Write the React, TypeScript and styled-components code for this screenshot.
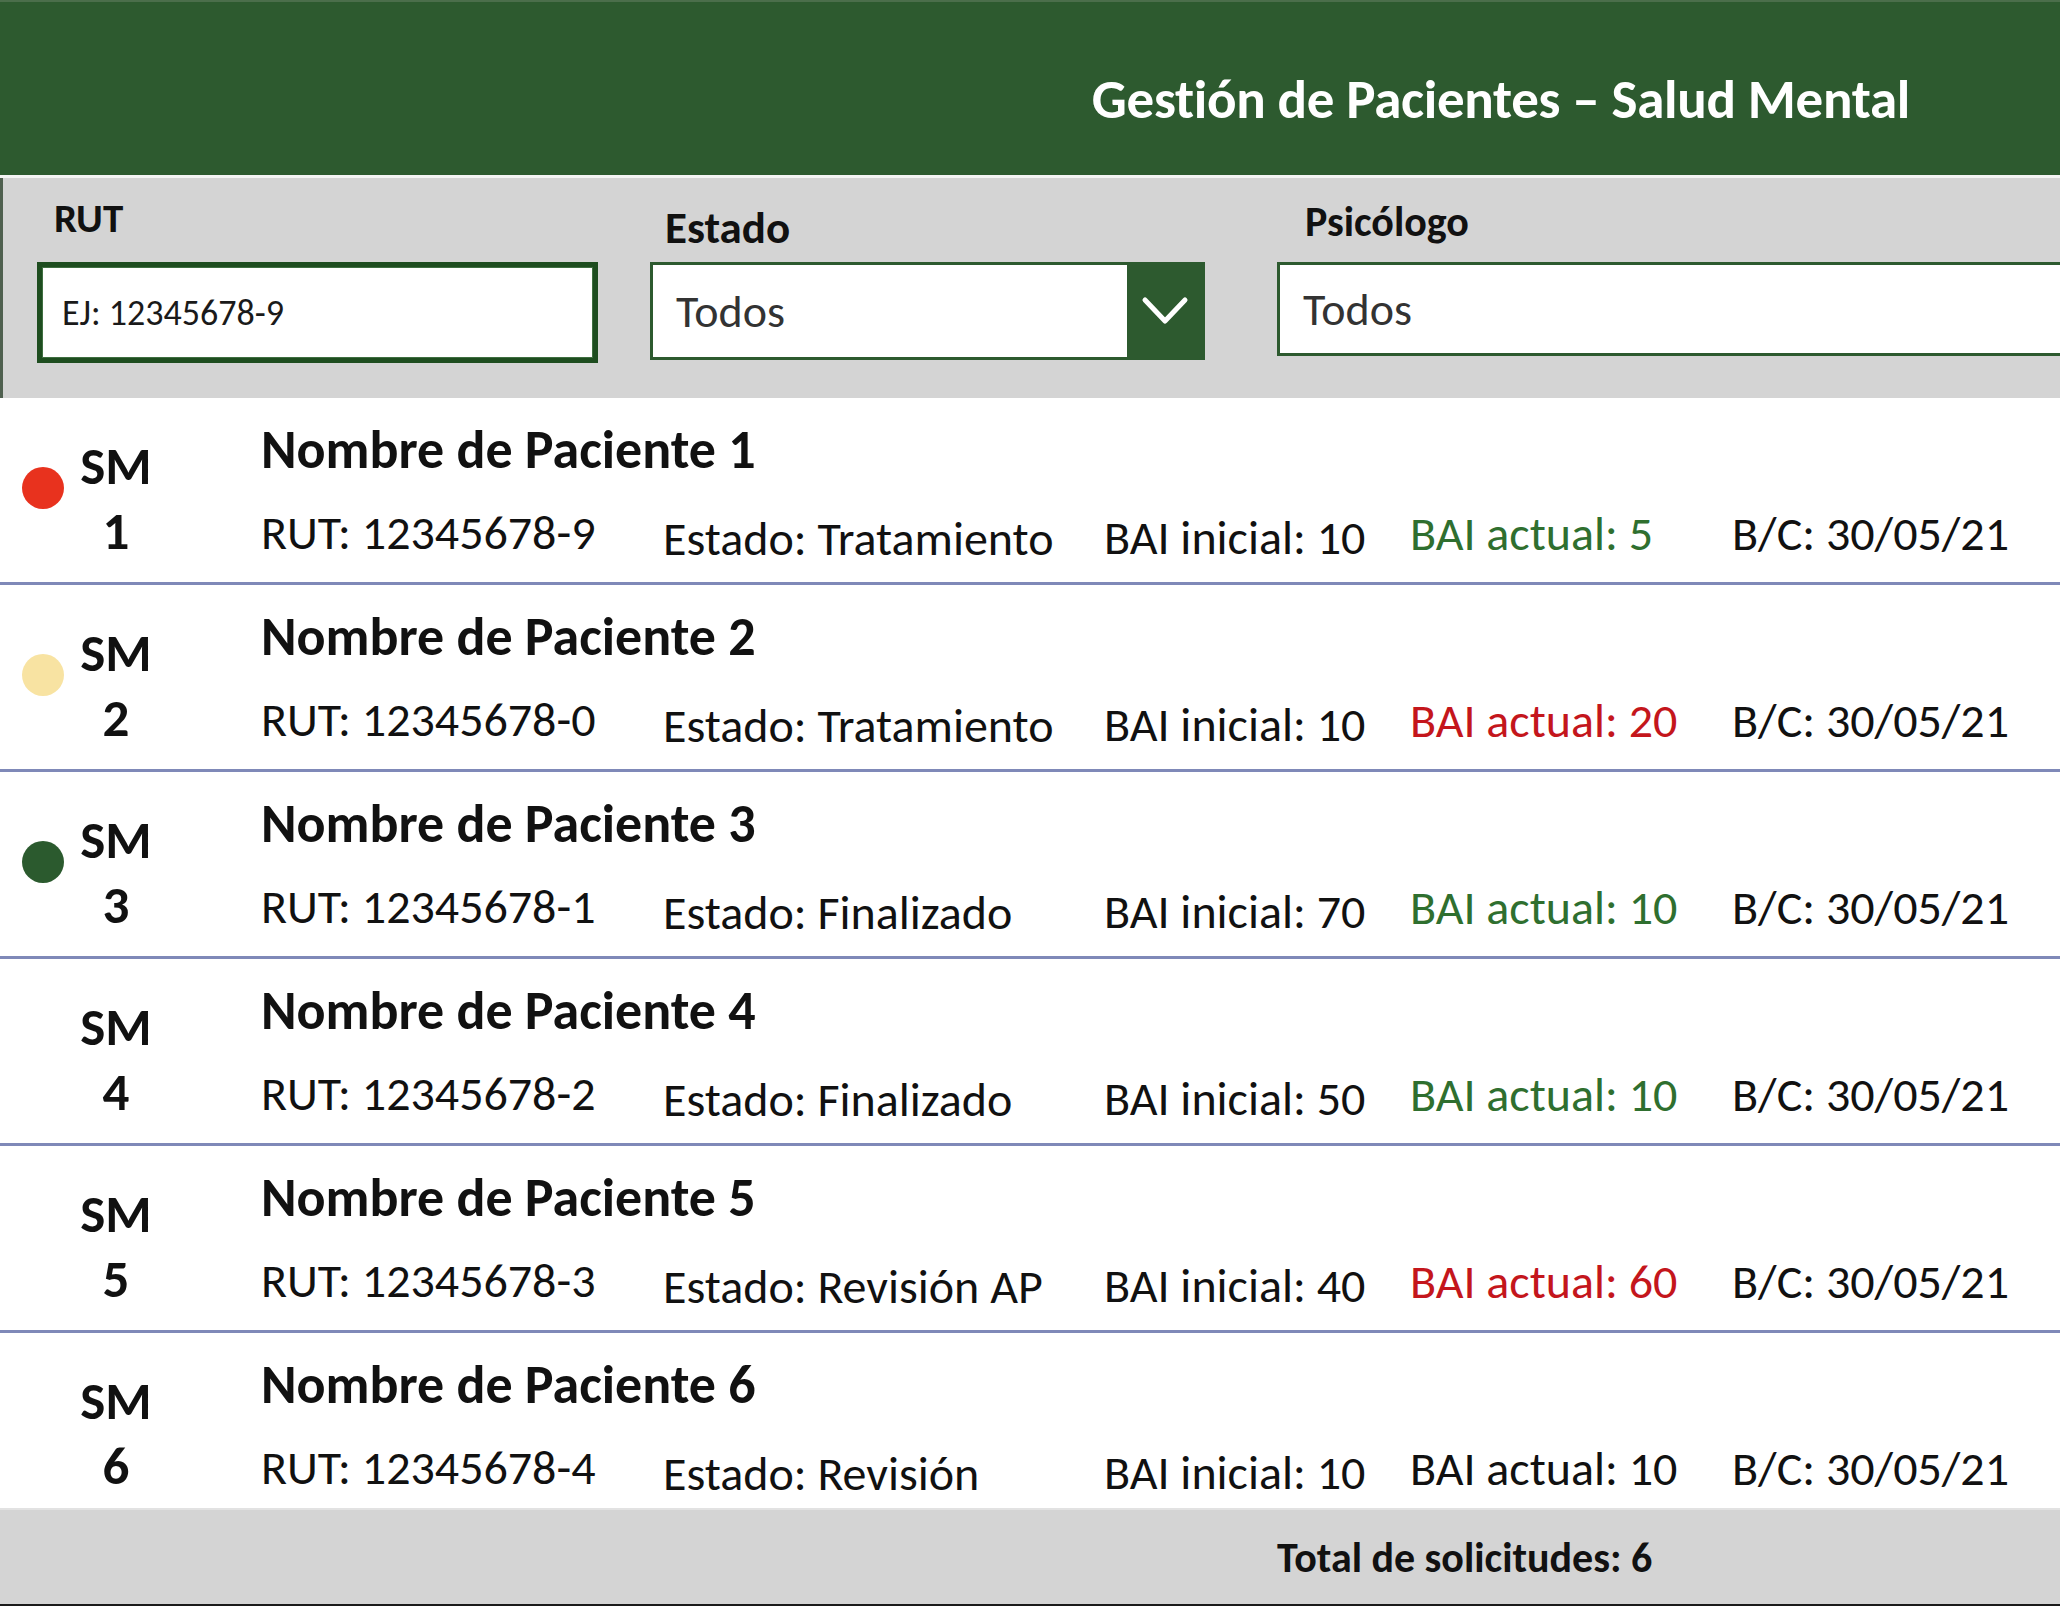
import React from "react";
import styled, { createGlobalStyle } from "styled-components";

const GlobalStyle = createGlobalStyle`
  html, body { margin: 0; padding: 0; background: #ffffff; }
  body {
    font-family: Carlito, Calibri, Lato, "Open Sans", sans-serif;
    color: #111;
    font-variant-ligatures: none;
  }
  * { box-sizing: border-box; }
`;

const Page = styled.div`
  width: 2060px;
  height: 1606px;
  display: flex;
  flex-direction: column;
  overflow: hidden;
  background: #fff;
`;

const Header = styled.header`
  height: 178px;
  flex: none;
  background: #2d5a2f;
  border-top: 2px solid #4b6e4b;
  border-bottom: 3px solid #f4f4f4;
  display: flex;
  align-items: center;
  justify-content: flex-end;
  padding-right: 150px;
  padding-top: 22px;
`;

const Title = styled.h1`
  margin: 0;
  color: #fff;
  font-size: 55px;
  font-weight: 700;
  letter-spacing: -0.3px;
`;

const FilterPanel = styled.section`
  height: 220px;
  flex: none;
  background: #d4d4d4;
  border-left: 3px solid #4f604f;
  display: flex;
  align-items: flex-start;
  padding-top: 84px;
`;

const Field = styled.div<{ $width: string; $ml: number }>`
  width: ${(p) => p.$width};
  margin-left: ${(p) => p.$ml}px;
  flex: none;
  position: relative;
`;

const FieldLabel = styled.label<{ $left: number; $bottom: number; $size: number }>`
  position: absolute;
  left: ${(p) => p.$left}px;
  bottom: calc(100% + ${(p) => p.$bottom}px);
  font-size: ${(p) => p.$size}px;
  font-weight: 700;
  color: #111;
  line-height: 1;
  white-space: nowrap;
`;

const TextBox = styled.div`
  height: 101px;
  background: #fff;
  border: 5px solid #1e4d1f;
  box-shadow: inset 0 0 0 1px #3f6f40;
  display: flex;
  align-items: center;
  padding-left: 20px;
  font-size: 36px;
  color: #1a1a1a;
`;

const SelectBox = styled.div<{ $height: number }>`
  height: ${(p) => p.$height}px;
  background: #fff;
  border: 3px solid #2d5a2f;
  display: flex;
  align-items: stretch;
`;

const SelectValue = styled.div`
  flex: 1;
  display: flex;
  align-items: center;
  padding-left: 23px;
  font-size: 46px;
  color: #333;
`;

const SelectButton = styled.div`
  width: 75px;
  background: #2d5a2f;
  display: flex;
  align-items: center;
  justify-content: center;
`;

const List = styled.main`
  flex: 1;
  display: flex;
  flex-direction: column;
`;

const Row = styled.div<{ $last?: boolean }>`
  height: ${(p) => (p.$last ? "auto" : "187px")};
  flex: ${(p) => (p.$last ? 1 : "none")};
  border-bottom: ${(p) => (p.$last ? "none" : "3px solid #7f89b8")};
  display: flex;
  align-items: flex-start;
  padding-left: 22px;
`;

const Dot = styled.div<{ $color: string }>`
  width: 42px;
  height: 42px;
  border-radius: 50%;
  background: ${(p) => p.$color};
  margin-top: 69px;
  flex: none;
`;

const Code = styled.div`
  width: 104px;
  flex: none;
  margin-top: 36px;
  text-align: center;
  font-size: 53px;
  font-weight: 700;
  line-height: 65px;
  color: #111;
`;

const Main = styled.div`
  margin-left: 93px;
  flex: 1;
  display: flex;
  flex-direction: column;
`;

const Name = styled.div`
  margin-top: 21px;
  font-size: 54px;
  font-weight: 700;
  line-height: 62px;
  color: #111;
`;

const Details = styled.div`
  display: grid;
  grid-template-columns: 402px 441px 306px 322px auto;
  margin-top: 22px;
`;

const Cell = styled.span<{ $dy: number; $tone?: "green" | "red" }>`
  font-size: 48px;
  line-height: 60px;
  white-space: nowrap;
  transform: translateY(${(p) => p.$dy}px);
  color: ${(p) => (p.$tone === "green" ? "#2f6f2f" : p.$tone === "red" ? "#c4161c" : "#111")};
`;

const Footer = styled.footer`
  height: 98px;
  flex: none;
  background: #d4d4d4;
  border-top: 2px solid #e2e2e2;
  border-bottom: 2px solid #1a1a1a;
  display: flex;
  align-items: center;
  padding-left: 1277px;
  font-size: 42px;
  font-weight: 700;
  color: #111;
`;

type Patient = {
  n: number;
  dot?: string;
  rut: string;
  estado: string;
  inicial: number;
  actual: number;
  tone?: "green" | "red";
};

const patients: Patient[] = [
  { n: 1, dot: "#e8321e", rut: "12345678-9", estado: "Tratamiento", inicial: 10, actual: 5, tone: "green" },
  { n: 2, dot: "#f8e3a2", rut: "12345678-0", estado: "Tratamiento", inicial: 10, actual: 20, tone: "red" },
  { n: 3, dot: "#2b5a2e", rut: "12345678-1", estado: "Finalizado", inicial: 70, actual: 10, tone: "green" },
  { n: 4, rut: "12345678-2", estado: "Finalizado", inicial: 50, actual: 10, tone: "green" },
  { n: 5, rut: "12345678-3", estado: "Revisión AP", inicial: 40, actual: 60, tone: "red" },
  { n: 6, rut: "12345678-4", estado: "Revisión", inicial: 10, actual: 10 },
];

const Chevron = () => (
  <svg width="48" height="30" viewBox="0 0 48 30" fill="none">
    <path d="M4 4 L24 25 L44 4" stroke="#fff" strokeWidth="5" strokeLinecap="round" strokeLinejoin="round" />
  </svg>
);

export default function App() {
  return (
    <Page>
      <GlobalStyle />
      <Header>
        <Title>Gestión de Pacientes – Salud Mental</Title>
      </Header>
      <FilterPanel>
        <Field $width="561px" $ml={34}>
          <FieldLabel $left={17} $bottom={23} $size={41}>RUT</FieldLabel>
          <TextBox>EJ: 12345678-9</TextBox>
        </Field>
        <Field $width="555px" $ml={52}>
          <FieldLabel $left={15} $bottom={12} $size={45}>Estado</FieldLabel>
          <SelectBox $height={98}>
            <SelectValue>Todos</SelectValue>
            <SelectButton>
              <Chevron />
            </SelectButton>
          </SelectBox>
        </Field>
        <Field $width="800px" $ml={72}>
          <FieldLabel $left={28} $bottom={19} $size={42}>Psicólogo</FieldLabel>
          <SelectBox $height={94}>
            <SelectValue>Todos</SelectValue>
          </SelectBox>
        </Field>
      </FilterPanel>
      <List>
        {patients.map((p, i) => (
          <Row key={p.n} $last={i === patients.length - 1}>
            <Dot $color={p.dot ?? "transparent"} />
            <Code>
              SM
              <br />
              {p.n}
            </Code>
            <Main>
              <Name>Nombre de Paciente {p.n}</Name>
              <Details>
                <Cell $dy={0}>RUT: {p.rut}</Cell>
                <Cell $dy={6}>Estado: {p.estado}</Cell>
                <Cell $dy={5}>BAI inicial: {p.inicial}</Cell>
                <Cell $dy={1} $tone={p.tone}>BAI actual: {p.actual}</Cell>
                <Cell $dy={1}>B/C: 30/05/21</Cell>
              </Details>
            </Main>
          </Row>
        ))}
      </List>
      <Footer>Total de solicitudes: 6</Footer>
    </Page>
  );
}
